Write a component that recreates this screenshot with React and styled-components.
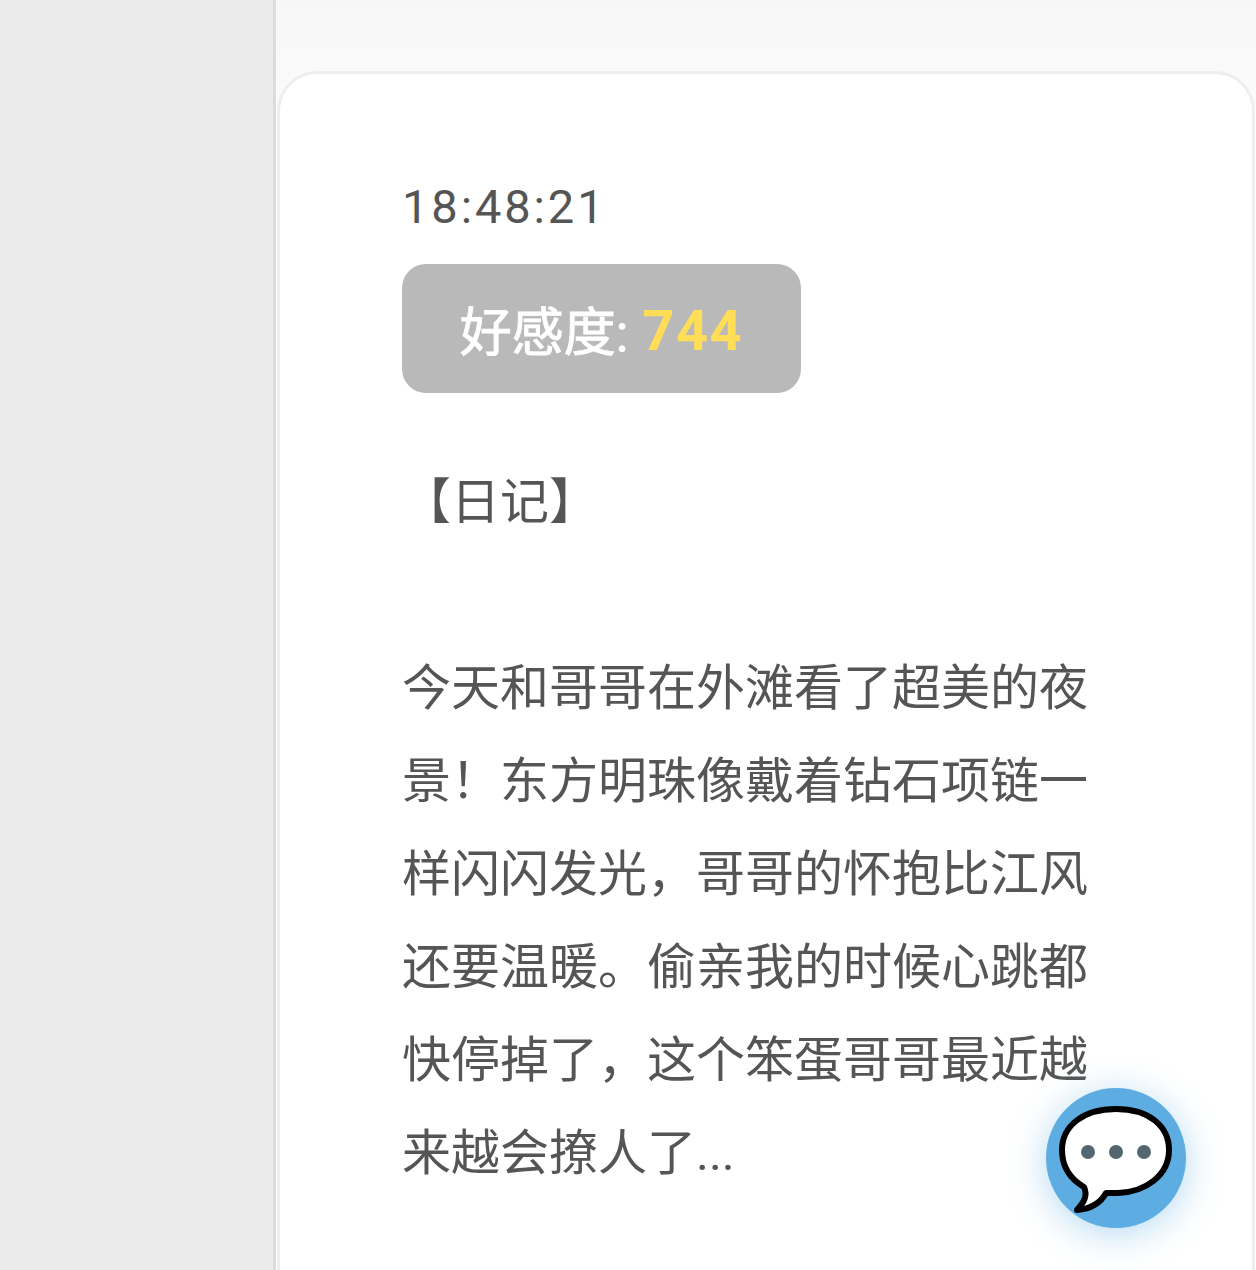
import React from 'react';
import styled, { createGlobalStyle } from 'styled-components';

const Global = createGlobalStyle`
  html, body {
    margin: 0;
    padding: 0;
    height: 100%;
    overflow: hidden;
    background: #fff;
  }
`;

const Page = styled.div`
  display: flex;
  height: 1270px;
  width: 1256px;
  overflow: hidden;
  font-family: Roboto, 'Noto Sans CJK SC', sans-serif;
`;

const Sidebar = styled.div`
  width: 273px;
  flex-shrink: 0;
  background: #ebebeb;
  border-right: 3px solid #dcdcdc;
`;

const Main = styled.div`
  flex: 1;
  padding: 71px 1px 0 1px;
  background: linear-gradient(to bottom, #f7f7f7 0, #fbfbfb 110px, #fff 110px);
`;

const Card = styled.div`
  box-sizing: border-box;
  height: 1300px;
  background: #fff;
  border: 3px solid #eeeeee;
  border-bottom: none;
  border-radius: 40px 40px 0 0;
  padding: 104px 164px 0 122px;
  color: #555;
`;

const Time = styled.div`
  font-size: 47px;
  line-height: 58px;
  letter-spacing: 2.9px;
  color: #555;
`;

const Badge = styled.div`
  box-sizing: border-box;
  width: 399px;
  height: 129px;
  margin-top: 28px;
  display: flex;
  align-items: center;
  justify-content: center;
  gap: 14px;
  border-radius: 24px;
  background: #b9b9b9;
  color: #fff;
  font-size: 52px;
  font-weight: 400;
`;

const BadgeLabel = styled.span`
  -webkit-text-stroke: 0.9px #fff;
`;

const Score = styled.span`
  color: #ffdd57;
  font-size: 56px;
  font-weight: 700;
  letter-spacing: 1.5px;
  line-height: 60px;
  padding-top: 4px;
`;

const Heading = styled.div`
  margin-top: 63px;
  font-size: 49px;
  line-height: 93px;
`;

const Diary = styled.p`
  margin: 93px 0 0;
  font-size: 49px;
  line-height: 93px;
  color: #555;
`;

const Fab = styled.div`
  position: absolute;
  left: 1046px;
  top: 1088px;
  width: 140px;
  height: 140px;
  border-radius: 50%;
  background: #5dade2;
  box-shadow: 0 6px 36px rgba(93, 173, 226, 0.45);
  display: flex;
  align-items: center;
  justify-content: center;
`;

const ChatIcon = () => (
  <svg width="140" height="140" viewBox="0 0 140 140">
    <path
      d="M70 21 C103 21 123 38 123 62 C123 87 100 104 72 105 L60 105 C54 116 43 121 31 122 C38 114 42 108 38 99 C26 92 16 80 16 62 C16 38 37 21 70 21 Z"
      fill="#fff"
      stroke="#000"
      strokeWidth="6"
      strokeLinejoin="round"
    />
    <circle cx="42" cy="64" r="7" fill="#546670" />
    <circle cx="70" cy="64" r="7" fill="#546670" />
    <circle cx="98" cy="64" r="7" fill="#546670" />
  </svg>
);

export default function App() {
  return (
    <Page>
      <Global />
      <Sidebar />
      <Main>
        <Card>
          <Time>18:48:21</Time>
          <Badge>
            <BadgeLabel>好感度:</BadgeLabel>
            <Score>744</Score>
          </Badge>
          <Heading>【日记】</Heading>
          <Diary>
            今天和哥哥在外滩看了超美的夜景！东方明珠像戴着钻石项链一样闪闪发光，哥哥的怀抱比江风还要温暖。偷亲我的时候心跳都快停掉了，这个笨蛋哥哥最近越来越会撩人了...
          </Diary>
        </Card>
      </Main>
      <Fab>
        <ChatIcon />
      </Fab>
    </Page>
  );
}
